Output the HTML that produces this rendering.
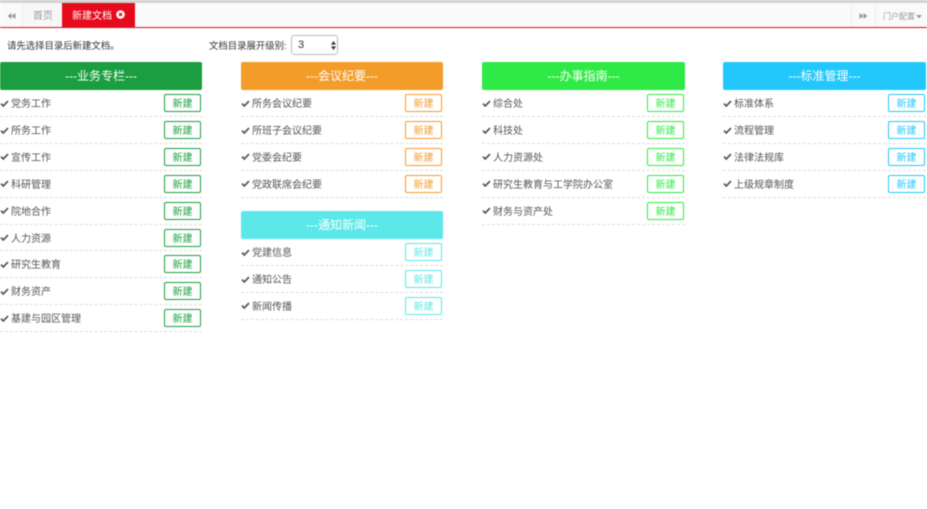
<!DOCTYPE html>
<html lang="zh">
<head>
<meta charset="utf-8">
<style>
html,body{margin:0;padding:0;background:#fff;width:927px;height:509px;overflow:hidden;}
#w{position:absolute;left:0;top:0;width:927px;height:509px;background:#fff;overflow:hidden;filter:blur(0.45px);font-family:"Liberation Sans","Noto Sans CJK SC",sans-serif;color:#333;}
*{box-sizing:border-box;}
.abs{position:absolute;}
#topbar{left:0;top:0;width:927px;height:3px;background:#d2d2d2;}
#tabs{left:0;top:3px;width:927px;height:24.5px;background:#fafafa;border-bottom:1px solid #d9121f;}
.sep{top:3px;width:1px;height:24px;background:#eee;}
.tab{font-size:10px;line-height:24px;top:5px;height:24px;}
.col{position:absolute;top:62px;width:202px;}
.hd{height:28px;margin-bottom:0.3px;border-radius:2px;color:#fff;font-size:12px;line-height:28px;text-align:center;}
.r{position:relative;height:26.85px;border-bottom:1px dashed #ddd;font-size:10px;color:#555;line-height:26px;padding-left:11px;}
.r span{position:relative;top:2px;}
.r svg{position:absolute;left:0;top:9.5px;}
.r b{position:absolute;right:1px;top:4px;width:37px;height:18px;border:1px solid;border-radius:2px;font-weight:normal;font-size:10px;line-height:19px;text-align:center;background:#fff;}
.g b{color:#1a9e3f;border-color:#1a9e3f;}
.o b{color:#f39c2a;border-color:#f39c2a;}
.l b{color:#2fea46;border-color:#2fea46;}
.b b{color:#22c8fb;border-color:#22c8fb;}
.c b{color:#5ce8e8;border-color:#5ce8e8;}
.c .hd{margin-bottom:0.8px;}
</style>
</head>
<body>
<svg width="0" height="0" style="position:absolute"><defs><symbol id="k" viewBox="0 0 10 8"><path d="M1 4.2 L3.6 6.8 L9 1.2" fill="none" stroke="#555" stroke-width="2"/></symbol></defs></svg>
<div id="w">
<div class="abs" id="topbar"></div>
<div class="abs" id="tabs"></div>
<div class="abs" style="left:22px;top:3px;width:40px;height:24px;background:#f7f7f7;"></div>
<div class="abs sep" style="left:22px;"></div>
<svg class="abs" style="left:7px;top:12px;" width="9" height="8" viewBox="0 0 9 8"><path d="M4.5 1V7L0.5 4ZM8.5 1V7L4.5 4Z" fill="#999"/></svg>
<div class="abs tab" style="left:33px;color:#999;">首页</div>
<div class="abs" style="left:62px;top:3px;width:73px;height:24px;background:#e60b1c;"></div>
<div class="abs tab" style="left:72px;color:#fff;">新建文档</div>
<svg class="abs" style="left:116px;top:10px;" width="9" height="9" viewBox="0 0 9 9"><circle cx="4.5" cy="4.5" r="4.3" fill="#fff"/><path d="M3 3L6 6M6 3L3 6" stroke="#e60b1c" stroke-width="1.3"/></svg>

<div class="abs sep" style="left:851px;"></div>
<div class="abs sep" style="left:875px;"></div>
<svg class="abs" style="left:859px;top:12px;" width="9" height="8" viewBox="0 0 9 8"><path d="M0.5 1V7L4.5 4ZM4.5 1V7L8.5 4Z" fill="#999"/></svg>
<div class="abs" style="left:883px;top:4px;font-size:8px;line-height:26px;color:#999;">门户配置</div>
<svg class="abs" style="left:916px;top:15px;" width="6" height="4" viewBox="0 0 6 4"><path d="M0 0H6L3 3.5Z" fill="#999"/></svg>

<div class="abs" style="left:7px;top:39px;font-size:9.4px;line-height:14px;color:#333;">请先选择目录后新建文档。</div>
<div class="abs" style="left:209px;top:39px;font-size:9.4px;line-height:14px;color:#333;">文档目录展开级别:</div>
<div class="abs" style="left:291px;top:35px;width:47px;height:20px;border:1px solid #bbb;border-radius:3px;background:#fff;font-size:11px;line-height:19px;padding-left:6px;color:#333;">3</div>
<svg class="abs" style="left:331px;top:41px;" width="5" height="9" viewBox="0 0 5 9"><path d="M2.5 0L5 3.6H0ZM2.5 9L0 5.4H5Z" fill="#333"/></svg>

<div class="col g" style="left:0;">
<div class="hd" style="background:#1a9e3f;">---业务专栏---</div>
<div class="r"><svg width="9" height="7"><use href="#k"/></svg><span>党务工作</span><b>新建</b></div>
<div class="r"><svg width="9" height="7"><use href="#k"/></svg><span>所务工作</span><b>新建</b></div>
<div class="r"><svg width="9" height="7"><use href="#k"/></svg><span>宣传工作</span><b>新建</b></div>
<div class="r"><svg width="9" height="7"><use href="#k"/></svg><span>科研管理</span><b>新建</b></div>
<div class="r"><svg width="9" height="7"><use href="#k"/></svg><span>院地合作</span><b>新建</b></div>
<div class="r"><svg width="9" height="7"><use href="#k"/></svg><span>人力资源</span><b>新建</b></div>
<div class="r"><svg width="9" height="7"><use href="#k"/></svg><span>研究生教育</span><b>新建</b></div>
<div class="r"><svg width="9" height="7"><use href="#k"/></svg><span>财务资产</span><b>新建</b></div>
<div class="r"><svg width="9" height="7"><use href="#k"/></svg><span>基建与园区管理</span><b>新建</b></div>
</div>

<div class="col o" style="left:241px;">
<div class="hd" style="background:#f39c2a;">---会议纪要---</div>
<div class="r"><svg width="9" height="7"><use href="#k"/></svg><span>所务会议纪要</span><b>新建</b></div>
<div class="r"><svg width="9" height="7"><use href="#k"/></svg><span>所班子会议纪要</span><b>新建</b></div>
<div class="r"><svg width="9" height="7"><use href="#k"/></svg><span>党委会纪要</span><b>新建</b></div>
<div class="r"><svg width="9" height="7"><use href="#k"/></svg><span>党政联席会纪要</span><b>新建</b></div>
</div>

<div class="col c" style="left:241px;top:210.5px;">
<div class="hd" style="background:#5ce8e8;">---通知新闻---</div>
<div class="r"><svg width="9" height="7"><use href="#k"/></svg><span>党建信息</span><b>新建</b></div>
<div class="r"><svg width="9" height="7"><use href="#k"/></svg><span>通知公告</span><b>新建</b></div>
<div class="r"><svg width="9" height="7"><use href="#k"/></svg><span>新闻传播</span><b>新建</b></div>
</div>

<div class="col l" style="left:482px;width:203px;">
<div class="hd" style="background:#2fea46;">---办事指南---</div>
<div class="r"><svg width="9" height="7"><use href="#k"/></svg><span>综合处</span><b>新建</b></div>
<div class="r"><svg width="9" height="7"><use href="#k"/></svg><span>科技处</span><b>新建</b></div>
<div class="r"><svg width="9" height="7"><use href="#k"/></svg><span>人力资源处</span><b>新建</b></div>
<div class="r"><svg width="9" height="7"><use href="#k"/></svg><span>研究生教育与工学院办公室</span><b>新建</b></div>
<div class="r"><svg width="9" height="7"><use href="#k"/></svg><span>财务与资产处</span><b>新建</b></div>
</div>

<div class="col b" style="left:723px;width:203px;">
<div class="hd" style="background:#22c8fb;">---标准管理---</div>
<div class="r"><svg width="9" height="7"><use href="#k"/></svg><span>标准体系</span><b>新建</b></div>
<div class="r"><svg width="9" height="7"><use href="#k"/></svg><span>流程管理</span><b>新建</b></div>
<div class="r"><svg width="9" height="7"><use href="#k"/></svg><span>法律法规库</span><b>新建</b></div>
<div class="r"><svg width="9" height="7"><use href="#k"/></svg><span>上级规章制度</span><b>新建</b></div>
</div>
</div>
</body>
</html>
